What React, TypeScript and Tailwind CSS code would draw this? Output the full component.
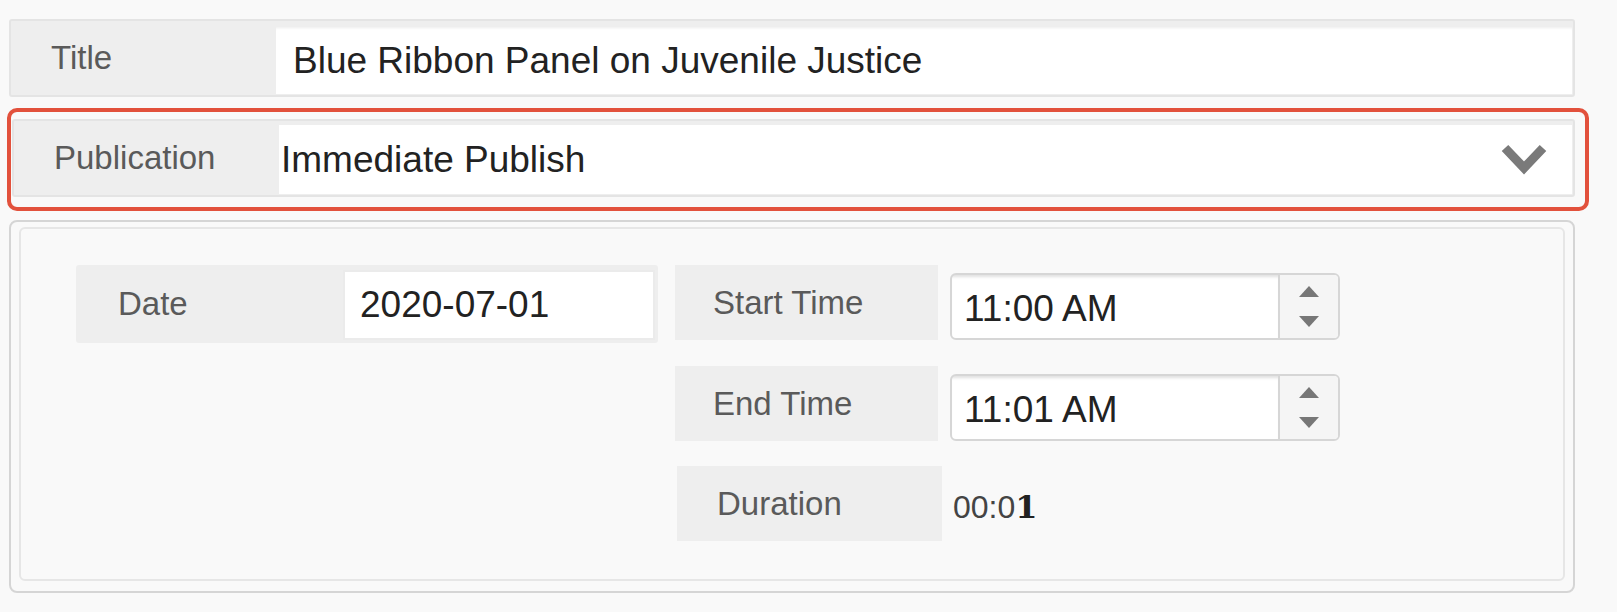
import type { ReactNode } from 'react'

const LABEL = 'text-[33px] text-[#5a5a5a]'
const VALUE = 'text-[37px] text-[#222222]'

function Chevron() {
  return (
    <svg width="48" height="34" viewBox="0 0 48 34" className="shrink-0">
      <polyline
        points="5,5 24,25 43,5"
        fill="none"
        stroke="#7a7a7a"
        strokeWidth="9"
        strokeLinejoin="miter"
      />
    </svg>
  )
}

function Spinner() {
  return (
    <div className="flex w-[60px] flex-col items-center justify-center gap-[19px] border-l-2 border-[#d6d6d6] bg-[#f5f5f5]">
      <svg width="20" height="11" viewBox="0 0 20 11">
        <polygon points="10,0 20,11 0,11" fill="#777777" />
      </svg>
      <svg width="20" height="11" viewBox="0 0 20 11">
        <polygon points="0,0 20,0 10,11" fill="#777777" />
      </svg>
    </div>
  )
}

function TimeField({ label, value, className = '' }: { label: string; value: string; className?: string }) {
  return (
    <div className={`flex items-start ${className}`}>
      <div className={`flex h-[75px] w-[263px] items-center bg-[#eeeeee] pl-[38px] ${LABEL}`}>{label}</div>
      <div className="ml-[12px] mt-[8px] flex h-[67px] w-[390px] overflow-hidden rounded-[6px] border-2 border-[#d6d6d6] bg-white">
        <div className={`flex flex-1 items-center pl-[12px] pt-[4px] shadow-[inset_0_4px_3px_-2px_rgba(0,0,0,0.12)] ${VALUE}`}>
          {value}
        </div>
        <Spinner />
      </div>
    </div>
  )
}

function Row({ label, children, className = '' }: { label: string; children: ReactNode; className?: string }) {
  return (
    <div className={`flex h-[78px] rounded-[3px] border-2 border-[#e4e4e4] bg-[#eeeeee] ${className}`}>
      <div className={`flex w-[265px] shrink-0 items-center pl-[40px] ${LABEL}`}>{label}</div>
      {children}
    </div>
  )
}

export default function App() {
  return (
    <div
      className="h-[612px] w-[1617px] overflow-hidden bg-[#f9f9f9] px-[9px] pt-[19px]"
      style={{ fontFamily: '"Liberation Sans", Arial, sans-serif' }}
    >
      <div className="w-[1566px]">
        <Row label="Title">
          <div className={`mb-px mr-px mt-[6px] flex flex-1 items-center bg-white pl-[17px] shadow-[inset_0_3px_3px_-2px_rgba(0,0,0,0.08)] ${VALUE}`}>
            Blue Ribbon Panel on Juvenile Justice
          </div>
        </Row>

        <div className="relative ml-[3px] mt-[22px]">
          <Row label="Publication">
            <div className={`mb-px mr-px mt-[4px] flex flex-1 items-center justify-between bg-white pl-[2px] pr-[24px] ${VALUE}`}>
              <span>Immediate Publish</span>
              <Chevron />
            </div>
          </Row>
          <div className="pointer-events-none absolute -bottom-[14px] -left-[5px] -right-[14px] -top-[11px] rounded-[10px] border-4 border-[#e2513c]" />
        </div>

        <div className="mt-[23px] h-[373px] rounded-[8px] border-2 border-[#d5d5d5] px-[8px] pb-[10px] pt-[5px]">
          <div className="flex h-full gap-[17px] rounded-[6px] border-2 border-[#e6e6e6] pl-[55px] pt-[36px]">
            <div className="flex h-[78px] w-[582px] rounded-[3px] bg-[#eeeeee]">
              <div className={`flex w-[267px] items-center pl-[42px] ${LABEL}`}>Date</div>
              <div className={`mb-[3px] mr-[3px] mt-[5px] flex flex-1 items-center border-2 border-[#ebebeb] bg-white pl-[15px] ${VALUE}`}>
                2020-07-01
              </div>
            </div>

            <div className="flex flex-col">
              <TimeField label="Start Time" value="11:00 AM" />
              <TimeField label="End Time" value="11:01 AM" className="mt-[26px]" />
              <div className="mt-[25px] flex items-center">
                <div className={`ml-[2px] flex h-[75px] w-[265px] items-center bg-[#eeeeee] pl-[40px] ${LABEL}`}>Duration</div>
                <div className="ml-[11px] pt-[6px] text-[32px] text-[#444444]">
                  00:0<span className="font-bold text-[#222]" style={{ fontFamily: '"DejaVu Serif", serif' }}>1</span>
                </div>
              </div>
            </div>
          </div>
        </div>
      </div>
    </div>
  )
}
